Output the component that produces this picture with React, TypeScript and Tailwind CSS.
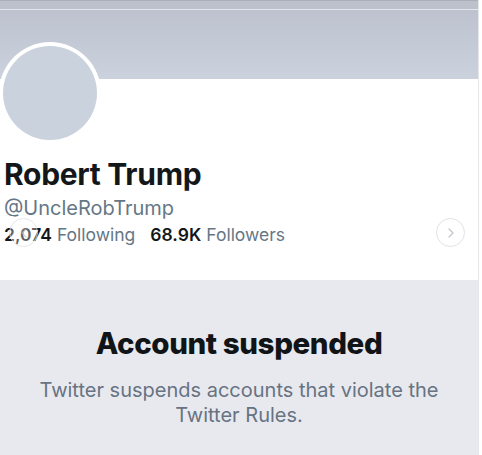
import { ChevronRight, ChevronLeft } from "lucide-react";

function CarouselButton({ side }: { side: "left" | "right" }) {
  return (
    <div
      className={
        "absolute top-[-6px] flex h-[29px] w-[29px] items-center justify-center rounded-full border border-[#dfe2e7] bg-white/40 text-[#c3c8d0] " +
        (side === "left" ? "left-[5px] opacity-80" : "right-[9px]")
      }
    >
      {side === "left" ? <ChevronLeft size={16} strokeWidth={2} /> : <ChevronRight size={16} strokeWidth={2} />}
    </div>
  );
}

export default function App() {
  return (
    <div className="flex h-[455px] w-[482px] overflow-hidden bg-white font-['Inter','Liberation_Sans',sans-serif]">
      <div className="flex w-[479px] flex-col border-r border-[#e4e6ea]">
        {/* banner */}
        <div className="h-[9px] border-t border-[#aab0ba] bg-[#bcc1cb]" />
        <div className="h-[70px] border-t border-[#e3e6ea] bg-gradient-to-b from-[#bdc2ce] to-[#cbd2dd]" />

        {/* profile card */}
        <div className="relative h-[201px] bg-white">
          <div className="ml-[-1px] mt-[-37px] h-[102px] w-[102px] rounded-full bg-white p-[4px]">
            <div className="h-full w-full rounded-full bg-[#cad2dd]" />
          </div>

          <div className="px-[4px] pt-[13px]">
            <h1 className="text-[30px] font-bold leading-[34px] tracking-[-0.3px] text-[#14171a]">Robert Trump</h1>
            <div className="mt-[5px] text-[20px] leading-[24px] text-[#657786]">@UncleRobTrump</div>
            <div className="relative mt-[4px] flex items-center text-[17.5px] leading-[22px]">
              <span className="font-semibold text-[#14171a]">2,074</span>
              <span className="ml-[5px] text-[#657786]">Following</span>
              <span className="ml-[15px] font-semibold text-[#14171a]">68.9K</span>
              <span className="ml-[5px] text-[#657786]">Followers</span>
              <CarouselButton side="left" />
              <CarouselButton side="right" />
            </div>
          </div>
        </div>

        {/* suspended notice */}
        <div className="flex flex-1 flex-col items-center bg-[#e7e9ee] pt-[46px] text-center">
          <h2 className="text-[29.5px] font-extrabold leading-[34px] tracking-[-0.4px] text-[#111417]">Account suspended</h2>
          <p className="mt-[18px] w-[440px] text-[20px] leading-[25px] text-[#677382]">
            Twitter suspends accounts that violate the Twitter Rules.
          </p>
        </div>
      </div>
      <div className="w-[2px] bg-white" />
    </div>
  );
}
